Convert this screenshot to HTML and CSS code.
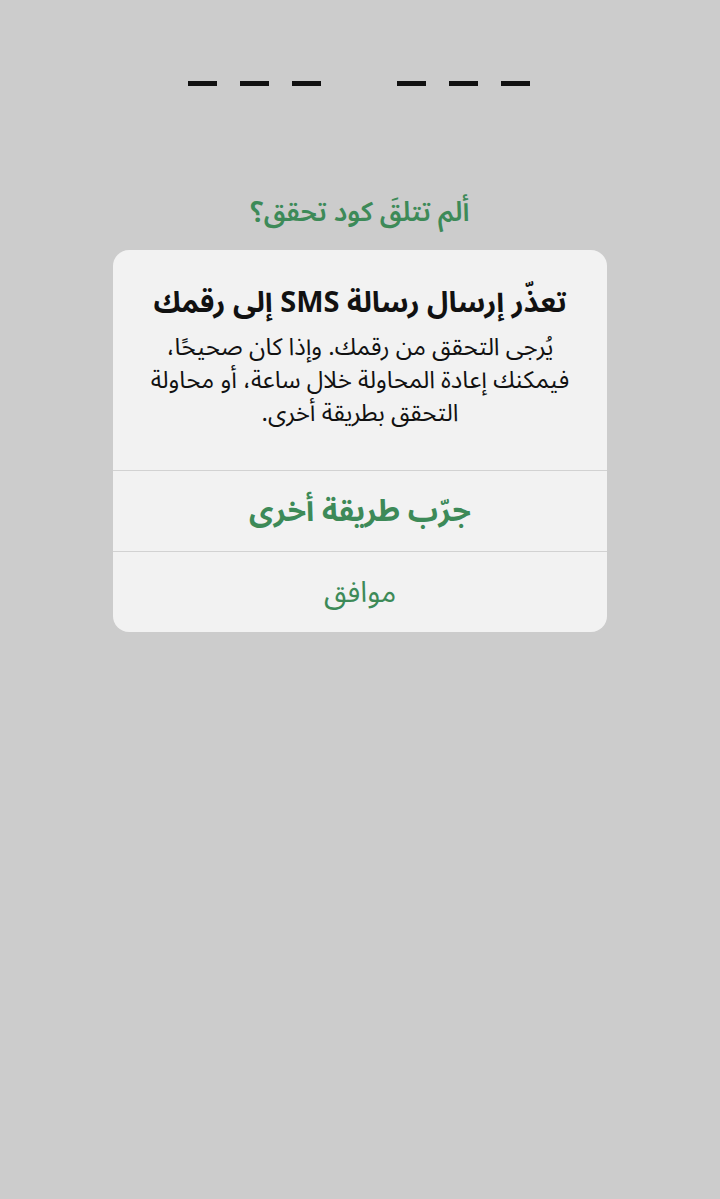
FILE: index.html
```html
<!DOCTYPE html>
<html lang="ar" dir="rtl">
<head>
<meta charset="utf-8">
<link rel="stylesheet" href="styles.css">
</head>
<body>
<div class="screen">
  <div class="code" dir="ltr">
    <div class="group"><span class="dash"></span><span class="dash"></span><span class="dash"></span></div>
    <div class="group"><span class="dash"></span><span class="dash"></span><span class="dash"></span></div>
  </div>
  <div class="resend">ألم تتلقَ كود تحقق؟</div>
  <div class="dialog">
    <div class="content">
      <div class="title">تعذّر إرسال رسالة SMS إلى رقمك</div>
      <div class="message">يُرجى التحقق من رقمك. وإذا كان صحيحًا،<br>فيمكنك إعادة المحاولة خلال ساعة، أو محاولة<br>التحقق بطريقة أخرى.</div>
    </div>
    <div class="action primary">جرّب طريقة أخرى</div>
    <div class="action">موافق</div>
  </div>
</div>
</body>
</html>
```
FILE: styles.css
```css
html, body {
  margin: 0;
  padding: 0;
  background: #cccccc;
}
body {
  width: 720px;
  height: 1199px;
  overflow: hidden;
  font-family: "Noto Sans Arabic", "DejaVu Sans", "Noto Sans", sans-serif;
}
.screen {
  display: flex;
  flex-direction: column;
  align-items: center;
}
.code {
  display: flex;
  gap: 76px;
  margin-top: 81px;
  margin-left: -2px;
}
.group {
  display: flex;
  gap: 23px;
}
.dash {
  display: block;
  width: 29px;
  height: 5px;
  background: #111111;
}
.resend {
  margin-top: 109px;
  color: #3d8a58;
  font-size: 27px;
  font-weight: 600;
  line-height: 36px;
  height: 36px;
}
.dialog {
  margin-top: 19px;
  width: 494px;
  background: #f2f2f2;
  border-radius: 16px;
  overflow: hidden;
}
.content {
  height: 220px;
  box-sizing: border-box;
  padding: 34px 20px 0;
  text-align: center;
  color: #111111;
}
.title {
  font-size: 29px;
  font-weight: 700;
  line-height: 38px;
  white-space: nowrap;
}
.message {
  margin-top: 9px;
  font-size: 24px;
  line-height: 33px;
  white-space: nowrap;
}
.action {
  height: 80px;
  border-top: 1px solid #d2d2d2;
  display: flex;
  align-items: center;
  justify-content: center;
  color: #3d8a58;
  font-size: 29px;
}
.action.primary {
  font-weight: 700;
  font-size: 30px;
}
```
